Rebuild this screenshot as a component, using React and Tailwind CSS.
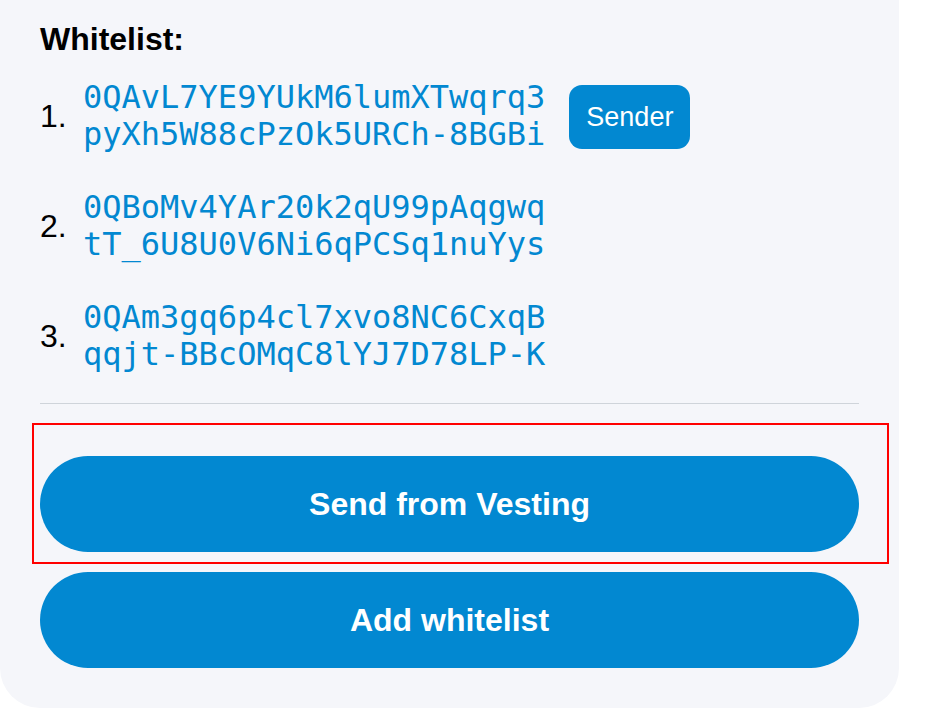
import React from "react";

const items = [
  ["0QAvL7YE9YUkM6lumXTwqrq3", "pyXh5W88cPzOk5URCh-8BGBi", true],
  ["0QBoMv4YAr20k2qU99pAqgwq", "tT_6U8U0V6Ni6qPCSq1nuYys", false],
  ["0QAm3gq6p4cl7xvo8NC6CxqB", "qqjt-BBcOMqC8lYJ7D78LP-K", false],
];

export default function App() {
  return (
    <div className="w-[936px] h-[720px] bg-white overflow-hidden" style={{ fontFamily: '"Liberation Sans", Arial, sans-serif' }}>
      <div className="relative w-[899px] h-[708px] bg-[#f5f6fa] rounded-b-[40px] px-[40px] pt-[21px] flex flex-col">
        <div className="text-[32px] leading-[36px] font-bold text-black">Whitelist:</div>
        <div className="mt-[22px] flex flex-col gap-[36px]">
          {items.map(([a, b, sender], i) => (
            <div key={i} className="flex items-center">
              <div className="w-[43px] text-[32px] leading-[36px] text-black">{i + 1}.</div>
              <div
                className="text-[32px] leading-[37px] text-[#0288d1]"
                style={{ fontFamily: '"DejaVu Sans Mono", monospace' }}
              >
                <div>{a}</div>
                <div>{b}</div>
              </div>
              {sender && (
                <div className="ml-[24px] mt-[2px] h-[64px] w-[121px] justify-center flex items-center rounded-[13px] bg-[#0288d1] text-white text-[27px]">
                  Sender
                </div>
              )}
            </div>
          ))}
        </div>
        <div className="mt-[30px] h-px bg-[#cfd4da]" />
        <div className="relative mt-[52px]">
          <div className="absolute left-[-8px] top-[-33px] right-[-30px] bottom-[-12px] border-2 border-[#ff0000] pointer-events-none" />
          <button className="w-full h-[96px] rounded-full bg-[#0288d1] text-white text-[32px] font-bold">
            Send from Vesting
          </button>
        </div>
        <button className="mt-[20px] w-full h-[96px] rounded-full bg-[#0288d1] text-white text-[32px] font-bold">
          Add whitelist
        </button>
      </div>
    </div>
  );
}
